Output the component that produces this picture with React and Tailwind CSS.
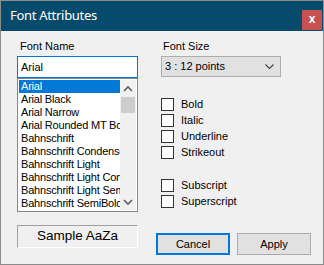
import React from "react";

const fonts = [
  "Arial",
  "Arial Black",
  "Arial Narrow",
  "Arial Rounded MT Bold",
  "Bahnschrift",
  "Bahnschrift Condensed",
  "Bahnschrift Light",
  "Bahnschrift Light Condensed",
  "Bahnschrift Light SemiCondensed",
  "Bahnschrift SemiBold",
];

function Check({ label }) {
  return (
    <div className="flex items-center h-[16px]">
      <div className="w-[13px] h-[13px] border border-[#333] bg-white" />
      <span className="ml-[7px]">{label}</span>
    </div>
  );
}

export default function App() {
  return (
    <div
      className="w-[324px] h-[265px] bg-[#f0f0f0] border border-[#8c8c8c] flex flex-col text-[11px] text-black"
      style={{ fontFamily: '"Liberation Sans", Arial, sans-serif' }}
    >
      <div className="h-[30px] bg-[#074b6c] flex items-center justify-between pl-[9px] pr-[1px] shrink-0">
        <span
          className="text-white text-[13px] tracking-[-0.3px]"
          style={{ fontFamily: '"Noto Sans", "Open Sans", sans-serif' }}
        >
          Font Attributes
        </span>
        <div className="w-[20px] h-[20px] mt-[7px] bg-[#c75050] flex items-center justify-center text-white font-bold text-[12px] leading-none pb-[2px]">
          x
        </div>
      </div>
      <div className="flex flex-1">
        <div className="ml-[16px] w-[121px] flex flex-col pt-[9px]">
          <div className="pl-[3px] h-[13px] leading-[13px]">Font Name</div>
          <div className="mt-[3px] h-[22px] border border-[#0078d7] bg-white flex items-center pl-[3px]">
            Arial
          </div>
          <div className="h-[134px] border border-[#828790] bg-white flex p-[1px]">
            <div className="flex-1 flex flex-col overflow-hidden">
              {fonts.map((f, i) => (
                <div
                  key={f}
                  className={
                    "h-[13px] leading-[13px] pl-[2px] whitespace-nowrap overflow-hidden tracking-[-0.2px] " +
                    (i === 0 ? "bg-[#0078d7] text-white" : "")
                  }
                >
                  {f}
                </div>
              ))}
            </div>
            <div className="w-[16px] bg-[#f0f0f0] flex flex-col items-center">
              <svg width="16" height="17" viewBox="0 0 16 17">
                <path d="M4 11 L8 7 L12 11" fill="none" stroke="#606060" strokeWidth="1.6" />
              </svg>
              <div className="w-[14px] h-[16px] bg-[#cdcdcd]" />
              <div className="flex-1" />
              <svg width="16" height="17" viewBox="0 0 16 17">
                <path d="M4 7 L8 11 L12 7" fill="none" stroke="#606060" strokeWidth="1.6" />
              </svg>
            </div>
          </div>
          <div className="mt-[13px] h-[23px] border-t border-l border-t-[#a0a0a0] border-l-[#a0a0a0] border-r border-b border-r-white border-b-white flex items-center justify-center text-[13.5px]">
            Sample AaZa
          </div>
        </div>
        <div className="ml-[18px] flex-1 flex flex-col pt-[9px]">
          <div className="pl-[7px] h-[13px] leading-[13px]">Font Size</div>
          <div className="ml-[5px] mt-[3px] w-[120px] h-[21px] bg-[#e1e1e1] border border-[#adadad] flex items-center justify-between pl-[3px] pr-[6px]">
            <span>3 : 12 points</span>
            <svg width="9" height="5" viewBox="0 0 9 5">
              <path d="M0.5 0.5 L4.5 4.5 L8.5 0.5" fill="none" stroke="#404040" strokeWidth="1.1" />
            </svg>
          </div>
          <div className="ml-[5px] mt-[19px] flex flex-col">
            <Check label="Bold" />
            <Check label="Italic" />
            <Check label="Underline" />
            <Check label="Strikeout" />
            <div className="h-[17px]" />
            <Check label="Subscript" />
            <Check label="Superscript" />
          </div>
          <div className="mt-[24px] flex gap-[7px]">
            <div className="w-[74px] h-[22px] bg-[#e1e1e1] border-2 border-[#0078d7] flex items-center justify-center">
              Cancel
            </div>
            <div className="w-[74px] h-[22px] bg-[#e1e1e1] border border-[#adadad] flex items-center justify-center">
              Apply
            </div>
          </div>
        </div>
      </div>
    </div>
  );
}
